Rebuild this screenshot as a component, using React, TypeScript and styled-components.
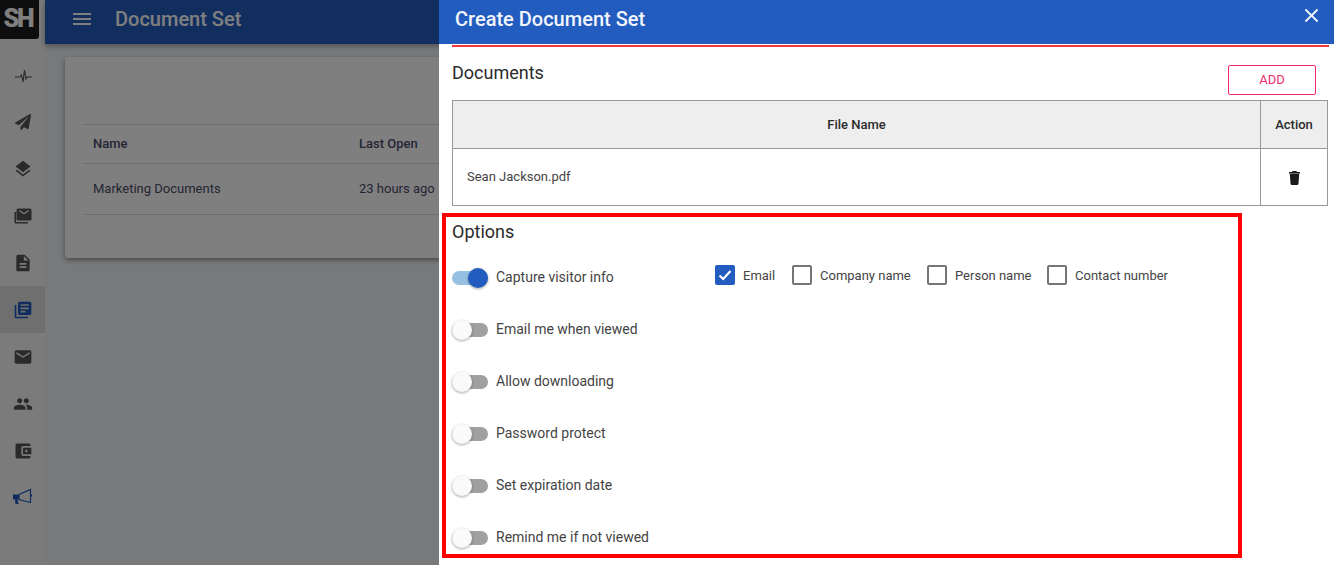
import React from 'react'
import styled, { createGlobalStyle } from 'styled-components'
import {
  MdMenu,
  MdLayers,
  MdDescription,
  MdLibraryBooks,
  MdEmail,
  MdPeople,
  MdClose,
  MdAccountBalanceWallet,
} from 'react-icons/md'
import { FaPaperPlane } from 'react-icons/fa'

const GlobalStyle = createGlobalStyle`
  html, body {
    margin: 0;
    padding: 0;
    height: 100%;
    overflow: hidden;
    font-family: Roboto, "Liberation Sans", sans-serif;
  }
  * { box-sizing: border-box; }
`

const Page = styled.div`
  position: relative;
  display: flex;
  width: 1334px;
  height: 565px;
  overflow: hidden;
  background: #f0f2f5;
`

const Sidebar = styled.aside`
  width: 45px;
  flex: none;
  background: #f6f6f6;
  display: flex;
  flex-direction: column;
`

const Logo = styled.div`
  width: 39px;
  height: 39px;
  margin-bottom: 11px;
  padding-right: 3px;
  background: #1c1c1c;
  border-radius: 0 0 3px 0;
  color: #fff;
  font-size: 25px;
  font-weight: 900;
  letter-spacing: -2px;
  line-height: 38px;
  text-align: center;
`

const NavItem = styled.div<{ $active?: boolean; $shift: number }>`
  height: 47.2px;
  display: flex;
  align-items: center;
  justify-content: center;
  padding-top: ${({ $shift }) => $shift}px;
  font-size: 20px;
  color: ${({ $active }) => ($active ? '#2259bd' : '#555')};
  background: ${({ $active }) => ($active ? '#dedede' : 'transparent')};
`

const Main = styled.main`
  flex: 1;
  min-width: 0;
  display: flex;
  flex-direction: column;
`

const TopBar = styled.header`
  height: 44px;
  flex: none;
  display: flex;
  align-items: center;
  gap: 21px;
  padding: 0 0 6px 25px;
  background: #225cbe;
  color: #fff;
  box-shadow: 0 2px 6px rgba(0, 0, 0, 0.35);
  font-size: 20px;
  font-weight: 500;
`

const Card = styled.section`
  margin: 13px 0 0 20px;
  width: 900px;
  height: 201px;
  padding: 67px 0 0 19px;
  background: #fff;
  border-radius: 3px;
  box-shadow: 0 2px 5px rgba(0, 0, 0, 0.4);
`

const ListRow = styled.div<{ $head?: boolean }>`
  height: ${({ $head }) => ($head ? '40px' : '52px')};
  display: flex;
  align-items: center;
  padding: 0 0 2px 9px;
  border-top: 1px solid #ddd;
  border-bottom: 1px solid #ddd;
  margin-top: ${({ $head }) => ($head ? '0' : '-1px')};
  font-size: 13px;
  font-weight: ${({ $head }) => ($head ? 500 : 400)};
  color: #4a4a6a;
`

const NameCell = styled.span`
  width: 266px;
`

const Scrim = styled.div`
  position: absolute;
  inset: 0;
  background: rgba(0, 0, 0, 0.5);
`

const Drawer = styled.aside`
  position: absolute;
  top: 0;
  right: 0;
  bottom: 0;
  width: 895px;
  background: #fff;
  display: flex;
  flex-direction: column;
`

const DrawerHeader = styled.header`
  height: 44px;
  flex: none;
  display: flex;
  align-items: center;
  justify-content: space-between;
  padding: 0 11px 6px 16px;
  background: #225cbe;
  color: #f2f6fc;
  font-size: 20px;
  font-weight: 500;
`

const CloseIcon = styled(MdClose)`
  font-size: 23px;
  margin-top: -8px;
`

const RedRule = styled.div`
  height: 2px;
  margin: 1px 5px 0 13px;
  background: #f0383e;
`

const DocsHead = styled.div`
  display: flex;
  justify-content: space-between;
  height: 53px;
  padding: 15px 18px 0 13px;
`

const Heading = styled.h2`
  margin: 0;
  font-size: 18px;
  font-weight: 400;
  line-height: 21px;
  color: #2b2b2b;
`

const AddButton = styled.button`
  width: 88px;
  height: 30px;
  margin-top: 3px;
  background: #fff;
  border: 1px solid #f02d6c;
  border-radius: 2px;
  color: #f02d6c;
  font-family: inherit;
  font-size: 13px;
  padding: 0 0 2px;
`

const DocTable = styled.table`
  width: 876px;
  margin-left: 13px;
  border-collapse: collapse;
  table-layout: fixed;
  font-size: 13px;
  color: #333;
`

const Th = styled.th<{ $narrow?: boolean }>`
  height: 48px;
  width: ${({ $narrow }) => ($narrow ? '67px' : 'auto')};
  background: #eee;
  border: 1px solid #999;
  font-weight: 500;
  color: #2b2b2b;
`

const Td = styled.td<{ $center?: boolean }>`
  height: 57px;
  border: 1px solid #999;
  padding: 0 0 2px ${({ $center }) => ($center ? '0' : '14px')};
  text-align: ${({ $center }) => ($center ? 'center' : 'left')};
  color: #444;
`

const TrashGlyph = styled.svg`
  display: inline-block;
  vertical-align: middle;
  margin-top: 3px;
  color: #1a1a1a;
`

const OptionsBox = styled.section`
  width: 800px;
  height: 345px;
  margin: 7px 0 0 3px;
  padding: 4px 0 0 6px;
  border: 4px solid #fe0000;
`

const OptionList = styled.div`
  display: flex;
  flex-direction: column;
  margin-top: 10px;
`

const OptionRow = styled.div`
  height: 52px;
  display: flex;
  align-items: center;
`

const SwitchTrack = styled.span<{ $on?: boolean }>`
  position: relative;
  width: 36px;
  height: 14px;
  flex: none;
  border-radius: 7px;
  background: ${({ $on }) => ($on ? '#96c1e3' : '#a0a0a0')};
`

const SwitchThumb = styled.span<{ $on?: boolean }>`
  position: absolute;
  top: -3px;
  left: ${({ $on }) => ($on ? '16px' : '0')};
  width: 20px;
  height: 20px;
  border-radius: 50%;
  background: ${({ $on }) => ($on ? '#225cbe' : '#fafafa')};
  box-shadow: 0 1px 3px rgba(0, 0, 0, 0.35);
`

const OptionLabel = styled.span`
  width: 219px;
  margin-left: 8px;
  padding-bottom: 2px;
  font-size: 14px;
  color: #444;
`

const CheckGroup = styled.div`
  display: flex;
  margin-top: -6px;
`

const CheckItem = styled.label<{ $width: number }>`
  width: ${({ $width }) => $width}px;
  display: flex;
  align-items: center;
  gap: 8px;
  font-size: 13px;
  color: #444;
`

const CheckBox = styled.span<{ $on?: boolean }>`
  width: 20px;
  height: 20px;
  flex: none;
  display: flex;
  align-items: center;
  justify-content: center;
  border-radius: 2px;
  background: ${({ $on }) => ($on ? '#225cbe' : '#fff')};
  border: ${({ $on }) => ($on ? 'none' : '2px solid #757575')};
`

const BlueIcon = styled.span`
  display: flex;
  color: #2259bd;
`

const PulseIcon = () => (
  <svg width="20" height="20" viewBox="-1 0 20 20" fill="none" stroke="currentColor" strokeWidth="1.1">
    <path d="M1 10h5l1.500-2 1.500 7 1.500-12 1.500 9 1-2h5" />
  </svg>
)

const MailStackIcon = () => (
  <svg width="20" height="20" viewBox="0 0 20 20" fill="currentColor">
    <path d="M5 2.500h12a1.500 1.500 0 0 1 1.500 1.500v9a1.500 1.500 0 0 1-1.500 1.500H5A1.500 1.500 0 0 1 3.500 13V4A1.500 1.500 0 0 1 5 2.500zm1 2.500 5 3.500 5-3.500-.7-1-4.300 3-4.300-3z" fillRule="evenodd" />
    <path d="M1.500 6v10A1.500 1.500 0 0 0 3 17.500h12V16H3V6z" />
  </svg>
)

const MegaphoneIcon = () => (
  <svg width="22" height="22" viewBox="0 0 22 22">
    <path d="M1 7.500h6v5H5.500l1 4.500H3.500L3 12.500H1z" fill="currentColor" />
    <path d="M7 7.500 18.500 2.500v13L7 12.500z" fill="none" stroke="currentColor" strokeWidth="1.200" />
    <path d="M18.500 7.500h1.500v2h-1.500z" fill="currentColor" />
  </svg>
)

const TrashIcon = () => (
  <TrashGlyph width="11" height="14" viewBox="0 0 11 14" fill="currentColor">
    <path d="M3.500 0h4l.5 1h3v1.500H0V1h3z" />
    <path d="M.8 2.800h9.400L9.500 12.500A1.500 1.500 0 0 1 8 14H3a1.500 1.500 0 0 1-1.500-1.500z" />
  </TrashGlyph>
)

const CheckIcon = () => (
  <svg width="16" height="16" viewBox="0 0 16 16" fill="none" stroke="#fff" strokeWidth="2.200">
    <path d="M2.500 8.500 6.200 12l7.300-8" />
  </svg>
)

const navItems = [
  { icon: <PulseIcon />, shift: 7 },
  { icon: <FaPaperPlane size={16} />, shift: 2 },
  { icon: <MdLayers />, shift: 2 },
  { icon: <MailStackIcon />, shift: 2 },
  { icon: <MdDescription />, shift: 2 },
  { icon: <MdLibraryBooks />, active: true, shift: 0 },
  { icon: <MdEmail />, shift: 0 },
  { icon: <MdPeople />, shift: 0 },
  { icon: <MdAccountBalanceWallet />, shift: 0 },
  { icon: <MegaphoneIcon />, blue: true, shift: 0 },
]

const options = [
  'Capture visitor info',
  'Email me when viewed',
  'Allow downloading',
  'Password protect',
  'Set expiration date',
  'Remind me if not viewed',
]

const captureFields = [
  { label: 'Email', width: 77, checked: true },
  { label: 'Company name', width: 135 },
  { label: 'Person name', width: 120 },
  { label: 'Contact number', width: 140 },
]

export default function App() {
  return (
    <Page>
      <GlobalStyle />
      <Sidebar>
        <Logo>SH</Logo>
        {navItems.map((item, idx) => (
          <NavItem key={idx} $active={item.active} $shift={item.shift}>
            {item.blue ? <BlueIcon>{item.icon}</BlueIcon> : item.icon}
          </NavItem>
        ))}
      </Sidebar>
      <Main>
        <TopBar>
          <MdMenu size={24} />
          Document Set
        </TopBar>
        <Card>
          <ListRow $head>
            <NameCell>Name</NameCell>
            <span>Last Open</span>
          </ListRow>
          <ListRow>
            <NameCell>Marketing Documents</NameCell>
            <span>23 hours ago</span>
          </ListRow>
        </Card>
      </Main>
      <Scrim />
      <Drawer>
        <DrawerHeader>
          Create Document Set
          <CloseIcon />
        </DrawerHeader>
        <RedRule />
        <DocsHead>
          <Heading>Documents</Heading>
          <AddButton>ADD</AddButton>
        </DocsHead>
        <DocTable>
          <thead>
            <tr>
              <Th>File Name</Th>
              <Th $narrow>Action</Th>
            </tr>
          </thead>
          <tbody>
            <tr>
              <Td>Sean Jackson.pdf</Td>
              <Td $center>
                <TrashIcon />
              </Td>
            </tr>
          </tbody>
        </DocTable>
        <OptionsBox>
          <Heading>Options</Heading>
          <OptionList>
            {options.map((label, idx) => (
              <OptionRow key={label}>
                <SwitchTrack $on={idx === 0}>
                  <SwitchThumb $on={idx === 0} />
                </SwitchTrack>
                <OptionLabel>{label}</OptionLabel>
                {idx === 0 && (
                  <CheckGroup>
                    {captureFields.map((field) => (
                      <CheckItem key={field.label} $width={field.width}>
                        <CheckBox $on={field.checked}>{field.checked && <CheckIcon />}</CheckBox>
                        {field.label}
                      </CheckItem>
                    ))}
                  </CheckGroup>
                )}
              </OptionRow>
            ))}
          </OptionList>
        </OptionsBox>
      </Drawer>
    </Page>
  )
}
